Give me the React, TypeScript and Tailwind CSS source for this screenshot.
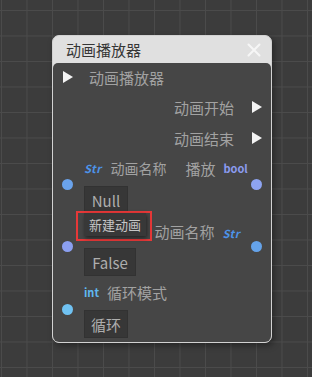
import React from "react";

function Tri({ className = "" }: { className?: string }) {
  return (
    <svg width="10" height="12" viewBox="0 0 10 12" className={className}>
      <path d="M0 0 L10 6 L0 12 Z" fill="#f4f4f4" />
    </svg>
  );
}

function Str() {
  return (
    <span className="text-[11px] font-bold italic leading-none text-[#4d94ea] tracking-[0.5px]">Str</span>
  );
}

function Box({ children, w }: { children: React.ReactNode; w: string }) {
  return (
    <div className={`ml-[31px] h-[28px] ${w} bg-[#373737] border border-[#323232] flex items-center justify-center text-[15px] text-[#aeaeae] leading-none`}>
      {children}
    </div>
  );
}

export default function App() {
  return (
    <div className="relative w-[312px] h-[377px] overflow-hidden bg-[#3c3c3c] bg-[linear-gradient(to_right,#4b4b4b_1px,transparent_1px),linear-gradient(to_bottom,#4b4b4b_1px,transparent_1px)] [background-size:25.5px_25.5px] [background-position:1px_10px] font-['Noto_Sans_CJK_SC','Noto_Sans',sans-serif]">
      <div className="absolute left-[52px] top-[35px] w-[220px] h-[308px] rounded-[7px] border border-[#d2d2d2] bg-[#e0e0e0] flex flex-col shadow-[2px_3px_6px_rgba(0,0,0,0.35)]">
        <div className="h-[27px] flex items-center justify-between pl-[13px] pr-[10px]">
          <span className="text-[15px] text-[#353535] leading-none">动画播放器</span>
          <svg width="14" height="14" viewBox="0 0 14 14">
            <path d="M1.5 1.5 L12.5 12.5 M12.5 1.5 L1.5 12.5" stroke="#f6f6f6" strokeWidth="2" strokeLinecap="round" />
          </svg>
        </div>
        <div className="relative flex-1 bg-[#464646] rounded-t-[5px] rounded-b-[6px] flex flex-col text-[#a2a2a2]">
          <div className="mt-[2px] h-[24px] flex items-center pl-[10px]">
            <Tri />
            <span className="ml-[16px] text-[15px] leading-none">动画播放器</span>
          </div>
          <div className="mt-[6px] h-[24px] flex items-center justify-end pr-[9px]">
            <span className="text-[15px] leading-none">动画开始</span>
            <Tri className="ml-[18px]" />
          </div>
          <div className="mt-[7px] h-[24px] flex items-center justify-end pr-[9px]">
            <span className="text-[15px] leading-none">动画结束</span>
            <Tri className="ml-[18px]" />
          </div>
          <div className="mt-[6px] h-[24px] flex items-center pl-[31px]">
            <Str />
            <span className="ml-[9px] text-[14px] leading-none">动画名称</span>
            <span className="ml-[19px] text-[15px] leading-none">播放</span>
            <span className="ml-[8px] text-[11px] font-bold leading-none text-[#8b9bf0]">bool</span>
          </div>
          <div className="mt-[6px]">
            <Box w="w-[44px]">Null</Box>
          </div>
          <div className="mt-[5px] h-[24px] flex items-center justify-end pr-[31px]">
            <span className="text-[15px] leading-none">动画名称</span>
            <span className="ml-[8px]"><Str /></span>
          </div>
          <div className="mt-[5px]">
            <Box w="w-[52px]">False</Box>
          </div>
          <div className="mt-[4px] h-[24px] flex items-center pl-[31px]">
            <span className="text-[11px] font-bold leading-none text-[#5fb8f0]">int</span>
            <span className="ml-[8px] text-[15px] leading-none">循环模式</span>
          </div>
          <div className="mt-[6px]">
            <Box w="w-[44px]">循环</Box>
          </div>

          <span className="absolute left-[9px] top-[116px] w-[11px] h-[11px] rounded-full bg-[#6aa3ec]" />
          <span className="absolute left-[198px] top-[116px] w-[11px] h-[11px] rounded-full bg-[#8ea4f2]" />
          <span className="absolute left-[9px] top-[178px] w-[11px] h-[11px] rounded-full bg-[#8b9ff0]" />
          <span className="absolute left-[198px] top-[178px] w-[11px] h-[11px] rounded-full bg-[#65a3ea]" />
          <span className="absolute left-[9px] top-[241px] w-[11px] h-[11px] rounded-full bg-[#70c2f2]" />

          <div className="absolute left-[23px] top-[148px] w-[76px] h-[30px] border-2 border-[#e63838]">
            <div className="absolute left-[6px] top-[0px] w-[62px] h-[23px] bg-[#383838] shadow-[1px_2px_4px_rgba(0,0,0,0.5)] flex items-center justify-center text-[13px] text-[#c6c6c6] leading-none">
              新建动画
            </div>
          </div>
        </div>
      </div>
    </div>
  );
}
